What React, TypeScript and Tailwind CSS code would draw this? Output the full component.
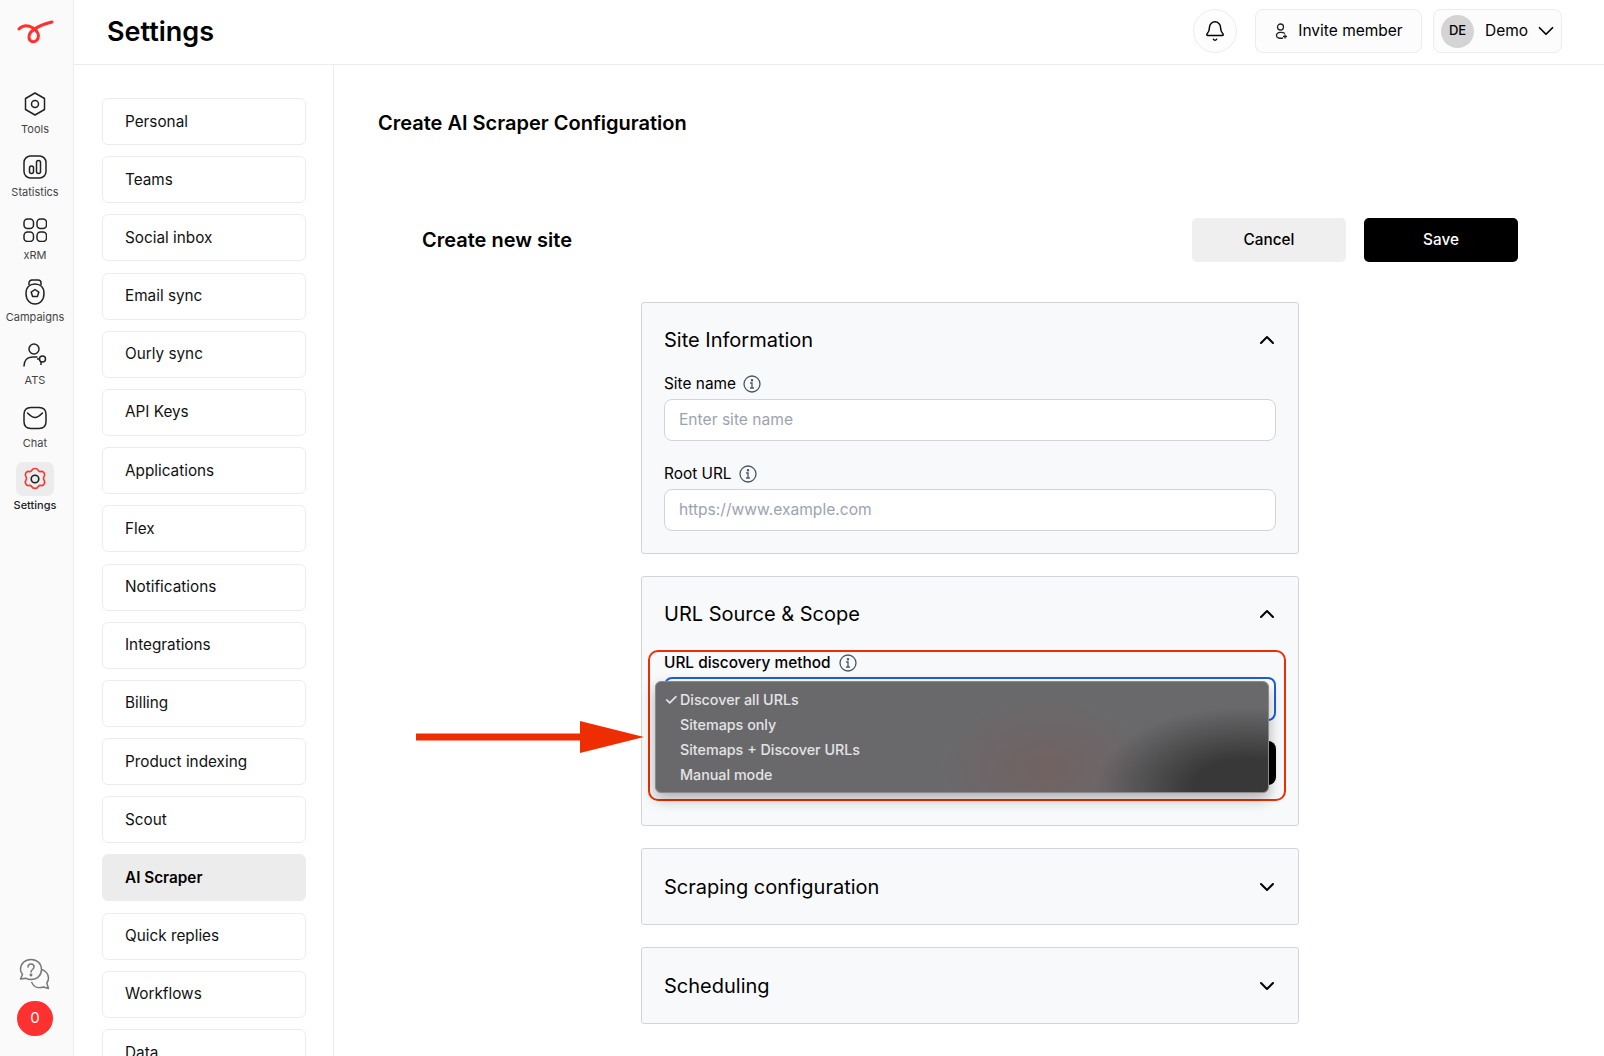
import React from 'react'
import { Bell, ChevronDown, ChevronUp } from 'lucide-react'

const navItems = [
  'Personal',
  'Teams',
  'Social inbox',
  'Email sync',
  'Ourly sync',
  'API Keys',
  'Applications',
  'Flex',
  'Notifications',
  'Integrations',
  'Billing',
  'Product indexing',
  'Scout',
  'AI Scraper',
  'Quick replies',
  'Workflows',
  'Data',
]

const ToolsIcon = () => (
  <svg width="24" height="26" viewBox="0 0 24 26" fill="none" stroke="#222" strokeWidth="1.5">
    <path d="M12 2l9.500 5.500v11L12 24l-9.500-5.500v-11z" strokeLinejoin="round" />
    <circle cx="12" cy="13" r="3.500" />
  </svg>
)

const StatsIcon = () => (
  <svg width="24" height="24" viewBox="0 0 24 24" fill="none" stroke="#222" strokeWidth="1.5">
    <rect x="1" y="1" width="22" height="22" rx="6.500" />
    <rect x="6.500" y="11" width="4" height="7.500" rx="2" />
    <rect x="13.500" y="5.500" width="4" height="13" rx="2" />
  </svg>
)

const GridIcon = () => (
  <svg width="24" height="24" viewBox="0 0 24 24" fill="none" stroke="#222" strokeWidth="1.5">
    <rect x="1" y="1" width="9.500" height="9.500" rx="3.500" />
    <rect x="14" y="1" width="9.500" height="9.500" rx="3.500" />
    <rect x="1" y="14" width="9.500" height="9.500" rx="3.500" />
    <rect x="14" y="14" width="9.500" height="9.500" rx="3.500" />
  </svg>
)

const CampaignIcon = () => (
  <svg width="22" height="26" viewBox="0 0 22 26" fill="none" stroke="#222" strokeWidth="1.5">
    <path d="M5 6V4a3 3 0 0 1 3-3h6a3 3 0 0 1 3 3v2" />
    <path d="M11 5c5 0 9 3 9 9.500S16 25 11 25 2 21 2 14.500 6 5 11 5z" />
    <path d="M11 10.500l3.800 2.700-1.400 4.300H8.600l-1.400-4.300z" strokeLinejoin="round" />
  </svg>
)

const AtsIcon = () => (
  <svg width="24" height="24" viewBox="0 0 24 24" fill="none" stroke="#222" strokeWidth="1.500">
    <circle cx="11" cy="6" r="5" />
    <path d="M1 23c0-5 3-9 9-9h4" strokeLinecap="round" />
    <circle cx="19.500" cy="16" r="3" />
    <path d="M14 16h3M18 19v3" />
  </svg>
)

const ChatIcon = () => (
  <svg width="24" height="24" viewBox="0 0 24 24" fill="none" stroke="#222" strokeWidth="1.500">
    <path d="M8 1.500h8c4.500 0 7 2.500 7 7v7c0 4.500-2.500 7-7 7H8c-4.500 0-7-2.500-7-7v-7c0-4.500 2.500-7 7-7z" />
    <path d="M4.500 7c2.500 2.500 5 4.500 7.500 4.500S17 9.500 19.500 7" strokeLinecap="round" />
  </svg>
)

const GearIcon = () => (
  <svg width="26" height="26" viewBox="0 0 24 24" fill="none" stroke="#ff3030" strokeWidth="1.500">
    <path
      d="M9 3c1-2.200 5-2.200 6 0 .5 1 1.500 1.300 2.500 1 2.500-.5 4.500 3 2.800 5-.7.800-.7 1.800 0 3.000 1.700 2-.3 5.500-2.800 5-1-.3-2 0-2.500 1-1 2.200-5 2.200-6 0-.5-1-1.500-1.300-2.500-1-2.500.5-4.500-3-2.800-5 .7-1.200.7-2.200 0-3.000-1.700-2 .3-5.500 2.800-5 1 .3 2 0 2.500-1z"
      strokeLinejoin="round"
      transform="translate(0 1)"
    />
    <circle cx="12" cy="12" r="3.500" stroke="#222" />
  </svg>
)

const HelpIcon = () => (
  <svg width="32" height="32" viewBox="0 0 32 32" fill="none" stroke="#777" strokeWidth="1.500">
    <path d="M12 1.500c6 0 10.500 4 10.500 10s-4.500 10-10.500 10c-2 0-3.500-.4-5-1.200L1.500 21l2-4.500C2.300 15 1.500 13.500 1.500 11.500c0-6 4.500-10 10.500-10z" strokeLinejoin="round" />
    <path d="M22.500 11.500c4 1 7 4.500 7 8.500 0 2-.6 3.500-1.700 5l1.700 5.500-5-1.500c-5 1.500-10 0-12-5" strokeLinejoin="round" />
    <path d="M9 9c0-2 1.500-3 3-3s3 1 3 3c0 2.500-3 2.500-3 5" strokeLinecap="round" />
    <circle cx="12" cy="17" r=".7" fill="#777" />
  </svg>
)

const sideItems = [
  { label: 'Tools', icon: <ToolsIcon /> },
  { label: 'Statistics', icon: <StatsIcon /> },
  { label: 'xRM', icon: <GridIcon /> },
  { label: 'Campaigns', icon: <CampaignIcon /> },
  { label: 'ATS', icon: <AtsIcon /> },
  { label: 'Chat', icon: <ChatIcon /> },
]

const InfoIcon = () => (
  <svg width="18" height="18" viewBox="0 0 18 18" fill="none" stroke="#4b5563" strokeWidth="1.300">
    <circle cx="9" cy="9" r="8" />
    <path d="M7.500 8h1.500v5M7.500 13h3" strokeLinecap="round" />
    <circle cx="9" cy="5.300" r=".6" fill="#4b5563" />
  </svg>
)

const Field = ({ label, placeholder }: { label: string; placeholder: string }) => (
  <div>
    <div className="flex h-[18px] items-center gap-[7px] text-[15.4px] leading-[18px] text-black">
      {label}
      <InfoIcon />
    </div>
    <div className="mt-[6px] flex h-[42px] items-center rounded-[8px] border border-[#d1d5db] bg-white px-[14px] text-[15.6px] text-[#9ca3af]">
      {placeholder}
    </div>
  </div>
)

const CollapsedCard = ({ title }: { title: string }) => (
  <div className="flex h-[77px] items-center justify-between rounded-[3px] border border-[#d1d5db] bg-[#f8f9fb] pl-[22px] pr-[19px]">
    <span className="text-[20px] font-normal text-black">{title}</span>
    <ChevronDown className="h-6 w-6 text-black" strokeWidth={2} />
  </div>
)

export default function App() {
  return (
    <div className="flex h-[1056px] overflow-hidden bg-white font-['Inter',sans-serif] text-black">
      {/* Left rail */}
      <aside className="flex w-[74px] shrink-0 flex-col items-center border-r border-[#ececec] bg-[#fafafa] pb-[20px] pr-[3px]">
        <div className="ml-[2px] mt-[18px] mb-[49px] h-[24px]">
          <svg width="38" height="26" viewBox="0 0 38 26" fill="none" stroke="#ff3030" strokeWidth="3" strokeLinecap="round">
            <path d="M2 11c4-4 9-4 14-1 5 3 7 8 4 12-3 3-8 2-8-3 0-5 7-11 23-15" />
          </svg>
        </div>
        {sideItems.map((item) => (
          <div key={item.label} className="flex h-[62.8px] w-full flex-col items-center">
            <div className="flex h-[26px] items-center">{item.icon}</div>
            <span className="mt-[5px] text-[11px] leading-[14px] text-[#444]">{item.label}</span>
          </div>
        ))}
        <div className="-mt-[6px] flex w-full flex-col items-center">
          <div className="flex h-[34px] w-[38px] items-center justify-center rounded-[7px] bg-[#ececec]">
            <GearIcon />
          </div>
          <span className="mt-[2px] text-[11px] font-medium leading-[14px] text-[#222]">Settings</span>
        </div>
        <div className="mt-auto">
          <HelpIcon />
        </div>
        <div className="mt-[11px] flex h-[35px] w-[36px] items-center justify-center rounded-full bg-[#ff3030] text-[15px] text-white">
          0
        </div>
      </aside>

      <div className="flex min-w-0 flex-1 flex-col">
        {/* Top bar */}
        <header className="flex h-[65px] shrink-0 items-center justify-between border-b border-[#ececec] pb-[2px] pl-[33px] pr-[42px]">
          <h1 className="text-[27px] font-semibold leading-none">Settings</h1>
          <div className="flex items-center">
            <div className="flex h-[44px] w-[44px] items-center justify-center rounded-full border border-[#ececec] bg-[#fdfdfd]">
              <Bell className="h-[22px] w-[22px]" strokeWidth={1.6} />
            </div>
            <div className="ml-[18px] flex h-[44px] w-[167px] items-center justify-center gap-[10px] rounded-[8px] border border-[#ececec] bg-[#fcfcfc] text-[15.5px]">
              <svg width="14" height="16" viewBox="0 0 14 16" fill="none" stroke="#222" strokeWidth="1.300">
                <circle cx="6.500" cy="4" r="3" />
                <path d="M11 10.500C9 9 3 8.500 2.500 12s4 3.500 6.500 3M9 13.500h4M11 11.500v4" />
              </svg>
              Invite member
            </div>
            <div className="ml-[11px] flex h-[44px] w-[129px] items-center rounded-[8px] border border-[#ececec] bg-[#fcfcfc] pl-[7px]">
              <div className="flex h-[33px] w-[33px] items-center justify-center rounded-full bg-[#d4d4d4] text-[13px] font-medium">
                DE
              </div>
              <span className="ml-[11px] text-[15.5px]">Demo</span>
              <ChevronDown className="ml-[5px] h-[26px] w-[26px]" strokeWidth={1.6} />
            </div>
          </div>
        </header>

        <div className="flex min-h-0 flex-1">
          {/* Settings nav */}
          <nav className="flex w-[260px] shrink-0 flex-col gap-[11.2px] border-r border-[#ececec] pl-[28px] pr-[27px] pt-[33px]">
            {navItems.map((item) => (
              <div
                key={item}
                className={
                  item === 'AI Scraper'
                    ? 'flex h-[47px] shrink-0 items-center rounded-[6px] border border-[#ececec] bg-[#ececec] pl-[22px] pt-[1px] text-[15.3px] font-semibold'
                    : 'flex h-[47px] shrink-0 items-center rounded-[6px] border border-[#ececec] bg-white pl-[22px] pt-[1px] text-[15.3px] text-[#111]'
                }
              >
                {item}
              </div>
            ))}
          </nav>

          {/* Main content */}
          <main className="min-w-0 flex-1 pt-[46px]">
            <h2 className="ml-[44px] text-[20px] font-semibold leading-[24px]">Create AI Scraper Configuration</h2>
            <div className="ml-[88px] mr-[86px] mt-[83px] flex h-[44px] items-center justify-between">
              <h3 className="text-[20px] font-semibold">Create new site</h3>
              <div className="flex gap-[18px]">
                <button className="h-[44px] w-[154px] rounded-[5px] bg-[#efefef] text-[15.3px] font-medium">Cancel</button>
                <button className="h-[44px] w-[154px] rounded-[5px] bg-black text-[15.3px] font-medium text-white">Save</button>
              </div>
            </div>

            <div className="ml-[307px] mt-[40px] flex w-[658px] flex-col gap-[22px]">
              <section className="h-[252px] rounded-[3px] border border-[#d1d5db] bg-[#f8f9fb] pl-[22px] pr-[19px] pt-[24px]">
                <div className="flex h-[26px] items-center justify-between">
                  <span className="text-[20px] font-normal">Site Information</span>
                  <ChevronUp className="h-6 w-6" strokeWidth={2} />
                </div>
                <div className="mr-[3px] mt-[22px] flex flex-col gap-[24px]">
                  <Field label="Site name" placeholder="Enter site name" />
                  <Field label="Root URL" placeholder="https://www.example.com" />
                </div>
              </section>

              <section className="relative h-[250px] rounded-[3px] border border-[#d1d5db] bg-[#f8f9fb] pl-[22px] pr-[19px] pt-[24px]">
                <div className="flex h-[26px] items-center justify-between">
                  <span className="text-[20px] font-normal">URL Source &amp; Scope</span>
                  <ChevronUp className="h-6 w-6" strokeWidth={2} />
                </div>
                <div className="mt-[27px] flex h-[18px] items-center gap-[8px] text-[15.4px] font-medium leading-[18px]">
                  URL discovery method
                  <InfoIcon />
                </div>
                <div className="mr-[3px] mt-[5px] h-[44px] rounded-[8px] border-2 border-[#1d5ce6] bg-white" />
                <div className="mr-[3px] mt-[20px] h-[44px] rounded-[8px] bg-black" />

                {/* Annotation frame */}
                <div className="absolute left-[6px] top-[73px] h-[151px] w-[638px] rounded-[10px] border-2 border-[#ee2e00]" />

                {/* Native select menu */}
                <div className="absolute left-[13px] top-[104px] h-[112px] w-[614px] rounded-[6px] border border-[#8a8a8a] bg-[#69696c] bg-[radial-gradient(ellipse_150px_80px_at_590px_105px,#383838_35%,rgba(56,56,56,0)_100%),radial-gradient(ellipse_110px_70px_at_390px_85px,#726262_0%,rgba(114,98,98,0)_100%)] py-[5px] text-[14.3px] font-medium leading-[25px] text-[#e4e4e4] shadow-[0_6px_14px_rgba(0,0,0,0.3)]">
                  <div className="relative pl-[24px]">
                    <span className="absolute left-[8px] top-0 text-[16px]">✓</span>
                    Discover all URLs
                  </div>
                  <div className="pl-[24px]">Sitemaps only</div>
                  <div className="pl-[24px]">Sitemaps + Discover URLs</div>
                  <div className="pl-[24px]">Manual mode</div>
                </div>

                {/* Annotation arrow */}
                <svg className="absolute left-[-226px] top-[144px]" width="228" height="32" viewBox="0 0 228 32">
                  <path d="M0 12.500h164V0l64 16-64 16V19.500H0z" fill="#ee2e00" />
                </svg>
              </section>

              <CollapsedCard title="Scraping configuration" />
              <CollapsedCard title="Scheduling" />
            </div>
          </main>
        </div>
      </div>
    </div>
  )
}
